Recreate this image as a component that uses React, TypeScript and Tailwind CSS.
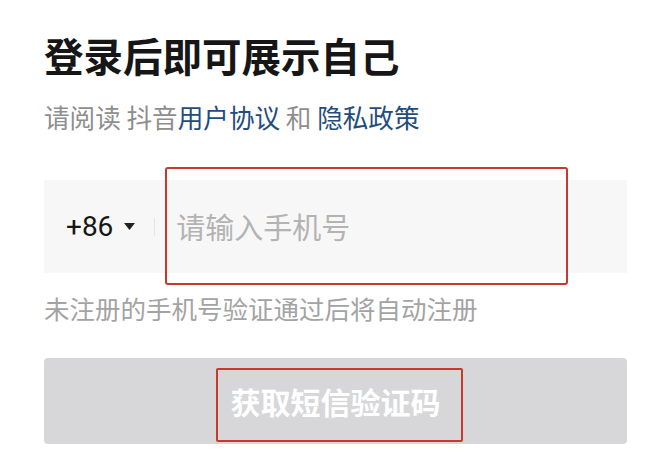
export default function App() {
  return (
    <div className="relative h-[459px] w-[660px] overflow-hidden bg-white font-['Noto_Sans_CJK_SC',sans-serif]">
      <div className="pl-[44px] pr-[33px] pt-[35px]">
        <h1 className="text-[39.5px] font-bold leading-[40px] text-[#161616]">登录后即可展示自己</h1>
        <p className="mt-[27px] text-[25.6px] leading-[30px] text-[#8e8e8e]">
          请阅读 抖音<span className="text-[#234c7e]">用户协议</span> 和 <span className="text-[#234c7e]">隐私政策</span>
        </p>

        <div className="mt-[48px] flex h-[93px] items-center bg-[#f7f7f7]">
          <span className="ml-[22px] font-['Roboto',sans-serif] text-[28px] text-[#161616]">+86</span>
          <svg className="ml-[11px]" width="11" height="7" viewBox="0 0 11 7">
            <path d="M0 0h11L5.5 7z" fill="#222" />
          </svg>
          <span className="ml-[19px] h-[18px] w-px bg-[#e4e4e4]" />
          <span className="ml-[21px] text-[29px] text-[#b3b3b3]">请输入手机号</span>
        </div>

        <p className="mt-[20px] text-[25.5px] leading-[30px] text-[#a3a3a3]">未注册的手机号验证通过后将自动注册</p>

        <button className="mt-[35px] flex h-[86px] w-full items-center justify-center rounded-[4px] bg-[#d7d7d9] text-[30px] font-bold text-white">
          获取短信验证码
        </button>
      </div>

      {/* annotation boxes */}
      <div className="absolute left-[165px] top-[167px] h-[118px] w-[403px] rounded-[3px] border-2 border-[#c9382d]" />
      <div className="absolute left-[216px] top-[368px] h-[74px] w-[247px] rounded-[2px] border-2 border-[#c9382d]" />
    </div>
  )
}
